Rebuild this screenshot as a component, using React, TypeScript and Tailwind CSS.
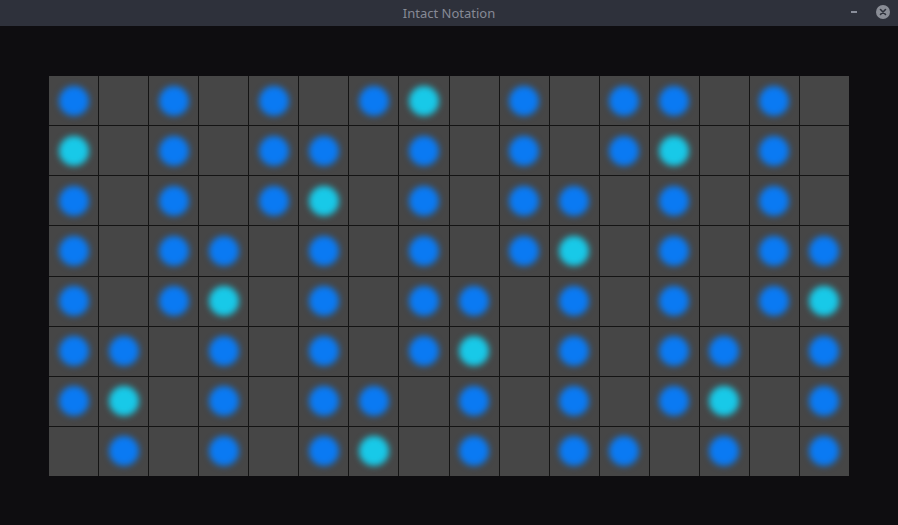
import React from 'react';

// 0 = empty, 1 = blue, 2 = cyan
const rows: number[][] = [
  [1, 0, 1, 0, 1, 0, 1, 2, 0, 1, 0, 1, 1, 0, 1, 0],
  [2, 0, 1, 0, 1, 1, 0, 1, 0, 1, 0, 1, 2, 0, 1, 0],
  [1, 0, 1, 0, 1, 2, 0, 1, 0, 1, 1, 0, 1, 0, 1, 0],
  [1, 0, 1, 1, 0, 1, 0, 1, 0, 1, 2, 0, 1, 0, 1, 1],
  [1, 0, 1, 2, 0, 1, 0, 1, 1, 0, 1, 0, 1, 0, 1, 2],
  [1, 1, 0, 1, 0, 1, 0, 1, 2, 0, 1, 0, 1, 1, 0, 1],
  [1, 2, 0, 1, 0, 1, 1, 0, 1, 0, 1, 0, 1, 2, 0, 1],
  [0, 1, 0, 1, 0, 1, 2, 0, 1, 0, 1, 1, 0, 1, 0, 1],
];

const Cell: React.FC<{ value: number }> = ({ value }) => (
  <div className="bg-[#464646] flex items-center justify-center">
    {value === 1 && <div className="w-[30px] h-[30px] rounded-full bg-[#0a7af3] blur-[3px]" />}
    {value === 2 && <div className="w-[30px] h-[30px] rounded-full bg-[#18c9e8] blur-[3px]" />}
  </div>
);

const App: React.FC = () => {
  return (
    <div className="w-[898px] h-[525px] bg-[#0e0d10] flex flex-col" style={{ fontFamily: '"Noto Sans", "Open Sans", sans-serif' }}>
      <div className="h-[26px] bg-[#2e313b] flex items-center relative shrink-0">
        <div className="flex-1 text-center text-[13px] text-[#868a96] leading-none">Intact Notation</div>
        <div className="absolute right-[41px] top-[11px] w-[6px] h-[2px] bg-[#8a8e9a]" />
        <div className="absolute right-[8px] top-[5px] w-[14px] h-[14px] rounded-full bg-[#8a8d96] flex items-center justify-center">
          <svg width="8" height="8" viewBox="0 0 8 8">
            <path d="M1.5 1.5 L6.5 6.5 M6.5 1.5 L1.5 6.5" stroke="#2e313b" strokeWidth="1.6" strokeLinecap="round" />
          </svg>
        </div>
      </div>
      <div className="pl-[49px] pt-[50px]">
        <div className="w-[800px] h-[400px] grid grid-cols-16 grid-rows-8 gap-px bg-[#141414]">
          {rows.flatMap((row, r) => row.map((v, c) => <Cell key={`${r}-${c}`} value={v} />))}
        </div>
      </div>
    </div>
  );
};

export default App;
